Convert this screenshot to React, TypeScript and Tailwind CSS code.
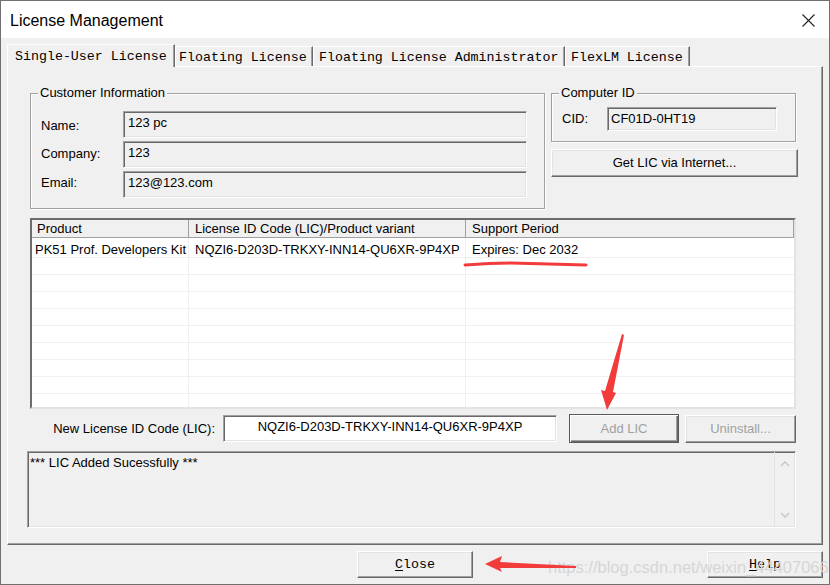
import type { ReactNode } from 'react';

// Classic Win32 "License Management" dialog (Keil uVision) with red annotations.

const raised =
  'border border-t-white border-l-white border-r-[#696969] border-b-[#696969] shadow-[inset_-1px_-1px_0_#a0a0a0,inset_1px_1px_0_#e3e3e3]';
const sunken =
  'border border-t-[#a0a0a0] border-l-[#a0a0a0] border-r-white border-b-white shadow-[inset_1px_1px_0_#696969,inset_-1px_-1px_0_#e3e3e3]';
const mono = "font-['Liberation_Mono','DejaVu_Sans_Mono',monospace] text-[13.3px]";

function Group({ label, className, children }: { label: string; className: string; children: ReactNode }) {
  return (
    <div className={`relative border border-[#a0a0a0] shadow-[inset_1px_1px_0_#fff,1px_1px_0_#fff] ${className}`}>
      <span className="absolute -top-[9px] left-[7px] bg-[#f0f0f0] px-[2px] leading-[15px]">{label}</span>
      {children}
    </div>
  );
}

function Field({ label, value, shift }: { label: string; value: string; shift: string }) {
  return (
    <div className="flex h-[27px] items-center">
      <span className={`w-[82px] ${shift}`}>{label}</span>
      <div className={`h-[27px] w-[404px] pl-[4px] pt-[3px] leading-[16px] ${sunken}`}>{value}</div>
    </div>
  );
}

const TABS = [
  { label: 'Floating License', w: 'w-[138px]', pl: 'pl-[3px]' },
  { label: 'Floating License Administrator', w: 'w-[252px]', pl: 'pl-[5px]' },
  { label: 'FlexLM License', w: 'w-[125px]', pl: 'pl-[5px]' },
];

const EMPTY_ROWS = [0, 1, 2, 3, 4, 5, 6, 7];

export default function App() {
  return (
    <div className="relative h-[585px] w-[830px] overflow-hidden border border-[#707070] bg-[#f0f0f0] font-['Liberation_Sans',Arial,sans-serif] text-[13px] text-black">
      {/* title bar */}
      <div className="flex h-[37px] items-center justify-between bg-white pl-[9px] pr-[14px]">
        <span className="pt-[3px] text-[16px]">License Management</span>
        <svg width="13" height="13" viewBox="0 0 13 13" className="mt-[1px]">
          <path d="M0.5 0.5 L12.5 12.5 M12.5 0.5 L0.5 12.5" stroke="#222" strokeWidth="1.1" fill="none" />
        </svg>
      </div>

      <div className="px-[6px]">
        {/* tabs */}
        <div className={`flex h-[28px] items-end ${mono}`}>
          <div className="relative z-10 -mb-[1px] flex h-[23px] w-[168px] items-center border-l border-t border-r border-l-white border-t-white border-r-[#696969] bg-[#f0f0f0] pl-[7px] pt-[1px] shadow-[inset_-1px_0_0_#a0a0a0]">
            Single-User License
          </div>
          {TABS.map((t) => (
            <div
              key={t.label}
              className={`flex h-[20px] items-center border-l border-t border-r border-l-white border-t-white border-r-[#696969] pt-[2px] shadow-[inset_-1px_0_0_#a0a0a0] ${t.w} ${t.pl}`}
            >
              {t.label}
            </div>
          ))}
        </div>

        {/* tab page */}
        <div className="h-[479px] w-[816px] border border-l-white border-t-white border-r-[#696969] border-b-[#696969] px-[22px] pt-[26px] shadow-[inset_-1px_-1px_0_#a0a0a0]">
          <div className="flex gap-[6px]">
            <Group label="Customer Information" className="h-[116px] w-[515px] pl-[10px] pt-[17px]">
              <div className="flex flex-col gap-[3px]">
                <Field label="Name:" value="123 pc" shift="pt-[3px]" />
                <Field label="Company:" value="123" shift="pb-[1px]" />
                <Field label="Email:" value="123@123.com" shift="pb-[4px]" />
              </div>
            </Group>
            <div className="flex flex-col">
              <Group label="Computer ID" className="h-[49px] w-[245px] pl-[10px] pt-[13px]">
                <div className="flex h-[24px] items-center">
                  <span className="w-[45px]">CID:</span>
                  <div className={`h-[24px] w-[170px] pl-[3px] pt-[3px] leading-[16px] ${sunken}`}>CF01D-0HT19</div>
                </div>
              </Group>
              <button className={`mt-[7px] h-[28px] w-[247px] bg-[#f0f0f0] pb-[1px] ${raised}`}>Get LIC via Internet...</button>
            </div>
          </div>

          {/* license list */}
          <div className="mt-[9px] flex h-[191px] w-[766px] flex-col border-2 border-t-[#6d6d6d] border-l-[#6d6d6d] border-r-[#e3e3e3] border-b-[#e3e3e3] bg-white">
            <div className="flex h-[18px] bg-[#f0f0f0] leading-[17px]">
              <div className="w-[157px] border-b border-r border-[#a0a0a0] pl-[5px]">Product</div>
              <div className="w-[277px] border-b border-r border-[#a0a0a0] pl-[6px]">License ID Code (LIC)/Product variant</div>
              <div className="flex-1 border-b border-r border-[#a0a0a0] pl-[6px]">Support Period</div>
            </div>
            <div className="flex h-[20px] items-center border-b border-[#f0f0f0]">
              <div className="h-full w-[157px] overflow-hidden whitespace-nowrap border-r border-[#f0f0f0] pl-[3px] pt-[2px]">PK51 Prof. Developers Kit</div>
              <div className="h-full w-[277px] border-r border-[#f0f0f0] pl-[6px] pt-[2px]">NQZI6-D203D-TRKXY-INN14-QU6XR-9P4XP</div>
              <div className="h-full flex-1 pl-[6px] pt-[2px]">Expires: Dec 2032</div>
            </div>
            {EMPTY_ROWS.map((r) => (
              <div key={r} className="flex h-[17px] border-b border-[#f0f0f0]">
                <div className="w-[157px] border-r border-[#f0f0f0]" />
                <div className="w-[277px] border-r border-[#f0f0f0]" />
              </div>
            ))}
            <div className="flex flex-1">
              <div className="w-[157px] border-r border-[#f0f0f0]" />
              <div className="w-[277px] border-r border-[#f0f0f0]" />
            </div>
          </div>

          {/* new LIC row */}
          <div className="mt-[5px] flex h-[29px] items-center">
            <span className="w-[185px] pt-[1px] text-right">New License ID Code (LIC):</span>
            <div className={`ml-[8px] h-[27px] w-[334px] bg-white pb-[3px] text-center leading-[22px] ${sunken}`}>
              NQZI6-D203D-TRKXY-INN14-QU6XR-9P4XP
            </div>
            <button className="ml-[12px] h-[29px] w-[110px] border border-[#5a5a5a] bg-[#f0f0f0] text-[#a0a0a0] shadow-[inset_1px_1px_0_#fff,inset_-1px_-1px_0_#696969,inset_-2px_-2px_0_#a0a0a0]">
              Add LIC
            </button>
            <button className={`ml-[6px] h-[28px] w-[111px] bg-[#f0f0f0] text-[#a0a0a0] ${raised}`}>Uninstall...</button>
          </div>

          {/* status box */}
          <div className={`-ml-[3px] mt-[8px] flex h-[77px] w-[769px] ${sunken}`}>
            <div className="flex-1 pl-[2px] pt-[3px] leading-[16px]">*** LIC Added Sucessfully ***</div>
            <div className="flex w-[21px] flex-col items-center justify-between border-l border-[#e3e3e3] py-[9px]">
              <svg width="10" height="6" viewBox="0 0 10 6">
                <path d="M1 5 L5 1 L9 5" stroke="#c4c4c4" strokeWidth="1.3" fill="none" />
              </svg>
              <svg width="10" height="6" viewBox="0 0 10 6">
                <path d="M1 1 L5 5 L9 1" stroke="#c4c4c4" strokeWidth="1.3" fill="none" />
              </svg>
            </div>
          </div>
        </div>

        {/* dialog buttons */}
        <div className={`mt-[6px] flex ${mono}`}>
          <button className={`ml-[350px] h-[27px] w-[116px] bg-[#f0f0f0] ${raised}`}>
            <span className="underline underline-offset-2">C</span>lose
          </button>
          <button className={`ml-[234px] h-[27px] w-[116px] bg-[#f0f0f0] ${raised}`}>
            <span className="underline underline-offset-2">H</span>elp
          </button>
        </div>
      </div>

      {/* watermark */}
      <span className="pointer-events-none absolute left-[547px] top-[555px] text-[16.5px] leading-[22px] text-[#d6d6d6]">
        https://blog.csdn.net/weixin_44407066
      </span>

      {/* red annotations */}
      <svg className="pointer-events-none absolute left-0 top-0" width="830" height="585" viewBox="0 0 830 585">
        <path d="M464 264 Q 490 262 510 262 Q 545 263 585 264" stroke="#f23c3c" strokeWidth="3" strokeLinecap="round" fill="none" />
        <polygon points="621,333 623,334 612,391 615,392 606,409 600,389 604,390" fill="#f23c3c" />
        <polygon points="484,563 501,555 499,561 575,565 575,567 499,567 501,571" fill="#f23c3c" />
      </svg>
    </div>
  );
}
